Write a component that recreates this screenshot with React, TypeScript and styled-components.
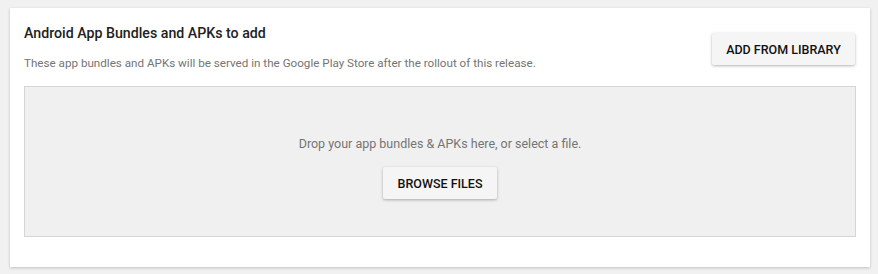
import * as React from 'react'
import styled, { createGlobalStyle } from 'styled-components'

const GlobalStyle = createGlobalStyle`
  body {
    margin: 0;
    background: #f1f1f1;
    font-family: Roboto, 'Liberation Sans', sans-serif;
  }
`

const Page = styled.div`
  padding: 8px 8px 7px 10px;
  width: 878px;
  height: 274px;
  box-sizing: border-box;
`

const Card = styled.section`
  background: #fff;
  box-shadow: 0 1px 3px rgba(0, 0, 0, 0.2);
  padding: 15px 14px 30px 14px;
  height: 259px;
  box-sizing: border-box;
`

const Header = styled.div`
  display: flex;
  justify-content: space-between;
  align-items: flex-start;
`

const Title = styled.h2`
  margin: 0;
  font-size: 14.2px;
  font-weight: 500;
  color: #212121;
  line-height: 20px;
`

const Subtitle = styled.p`
  margin: 12px 0 0;
  font-size: 11.65px;
  color: #757575;
  line-height: 16px;
`

const Button = styled.button<{ $width: number }>`
  height: 32px;
  width: ${(p) => p.$width}px;
  padding: 0;
  border: none;
  border-radius: 2px;
  background: #f5f5f5;
  box-shadow: 0 1px 3px rgba(0, 0, 0, 0.3);
  font-family: Roboto, 'Liberation Sans', sans-serif;
  font-size: 12.5px;
  font-weight: 500;
  color: #111;
  text-transform: uppercase;
  cursor: pointer;
`

const LibraryButton = styled(Button)`
  margin-top: 10px;
  margin-right: 1px;
`

const DropZone = styled.div`
  margin-top: 15px;
  height: 151px;
  box-sizing: border-box;
  background: #f0f0f0;
  border: 1px solid #d6d6d6;
  display: flex;
  flex-direction: column;
  align-items: center;
  padding-top: 49px;
  gap: 15px;
`

const DropText = styled.div`
  font-size: 12.5px;
  line-height: 16px;
  color: #757575;
`

export default function App() {
  return (
    <Page>
      <GlobalStyle />
      <Card>
        <Header>
          <div>
            <Title>Android App Bundles and APKs to add</Title>
            <Subtitle>
              These app bundles and APKs will be served in the Google Play Store after the rollout of this release.
            </Subtitle>
          </div>
          <LibraryButton $width={143}>Add from library</LibraryButton>
        </Header>
        <DropZone>
          <DropText>Drop your app bundles &amp; APKs here, or select a file.</DropText>
          <Button $width={114}>Browse files</Button>
        </DropZone>
      </Card>
    </Page>
  )
}
